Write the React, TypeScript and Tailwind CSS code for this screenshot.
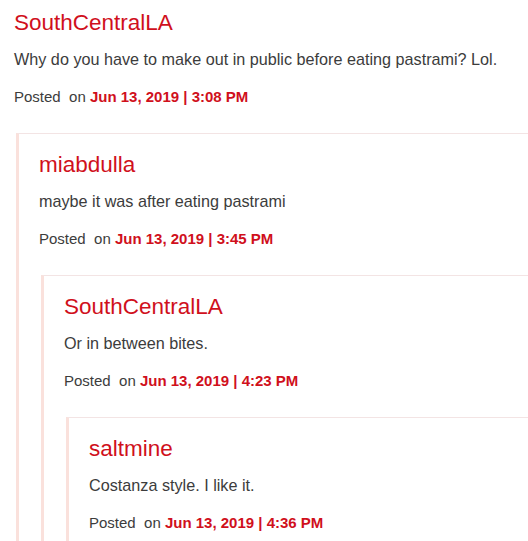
import React from 'react';

type Comment = {
  author: string;
  body: string;
  date: string;
  replies?: Comment[];
};

const thread: Comment = {
  author: 'SouthCentralLA',
  body: 'Why do you have to make out in public before eating pastrami? Lol.',
  date: 'Jun 13, 2019 | 3:08 PM',
  replies: [
    {
      author: 'miabdulla',
      body: 'maybe it was after eating pastrami',
      date: 'Jun 13, 2019 | 3:45 PM',
      replies: [
        {
          author: 'SouthCentralLA',
          body: 'Or in between bites.',
          date: 'Jun 13, 2019 | 4:23 PM',
          replies: [
            {
              author: 'saltmine',
              body: 'Costanza style. I like it.',
              date: 'Jun 13, 2019 | 4:36 PM',
            },
          ],
        },
      ],
    },
  ],
};

const CommentBody: React.FC<{ c: Comment }> = ({ c }) => (
  <>
    <h3 className="text-[22.5px] leading-[30px] text-[#d0101c] font-normal">{c.author}</h3>
    <p className="mt-[9px] text-[16.2px] leading-6 text-[#3c3c3c]">{c.body}</p>
    <p className="mt-4 text-[15px] leading-5 text-[#3c3c3c] whitespace-pre">
      {'Posted  on '}
      <span className="font-bold text-[#d0101c]">{c.date}</span>
    </p>
  </>
);

const Reply: React.FC<{ c: Comment }> = ({ c }) => (
  <div className="mt-[26px] ml-[2px] border-t border-t-[#f3e4e4] border-l-[3px] border-l-[#fae1dc] pl-5 pt-4 pb-6">
    <CommentBody c={c} />
    {c.replies?.map((r, i) => <Reply key={i} c={r} />)}
  </div>
);

export default function App() {
  return (
    <div className="w-[528px] h-[541px] overflow-hidden bg-white font-['Liberation_Sans',Arial,sans-serif]">
      <div className="pl-[14px] pt-2">
        <CommentBody c={thread} />
        {thread.replies?.map((r, i) => <Reply key={i} c={r} />)}
      </div>
    </div>
  );
}
